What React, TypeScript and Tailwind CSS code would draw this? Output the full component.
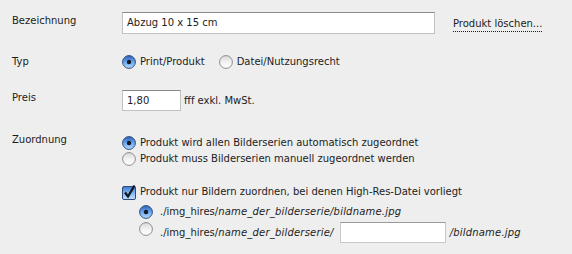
import { useId } from "react";

function Radio({ checked }: { checked?: boolean }) {
  const id = useId().replace(/:/g, "");
  return (
    <svg width="14" height="14" viewBox="0 0 14 14" className="shrink-0">
      <defs>
        <linearGradient id={`g${id}`} x1="0" y1="0" x2="0" y2="1">
          {checked ? (
            <>
              <stop offset="0" stopColor="#2a5fb8" />
              <stop offset="0.5" stopColor="#6aa6ee" />
              <stop offset="1" stopColor="#b9dcff" />
            </>
          ) : (
            <>
              <stop offset="0" stopColor="#d8d8d8" />
              <stop offset="0.55" stopColor="#f4f4f4" />
              <stop offset="1" stopColor="#ffffff" />
            </>
          )}
        </linearGradient>
      </defs>
      <circle
        cx="7"
        cy="7"
        r="6.4"
        fill={`url(#g${id})`}
        stroke={checked ? "#31507f" : "#8c8c8c"}
        strokeWidth="1"
      />
      {checked && <circle cx="7" cy="7" r="2.2" fill="#141a24" />}
    </svg>
  );
}

function Checkbox() {
  const id = useId().replace(/:/g, "");
  return (
    <svg width="15" height="15" viewBox="0 0 15 15" className="shrink-0 overflow-visible">
      <defs>
        <linearGradient id={`c${id}`} x1="0" y1="0" x2="0" y2="1">
          <stop offset="0" stopColor="#3f79cf" />
          <stop offset="0.5" stopColor="#7fb4f0" />
          <stop offset="1" stopColor="#c4e2ff" />
        </linearGradient>
      </defs>
      <rect x="0.5" y="1.5" width="13" height="13" rx="1.5" fill={`url(#c${id})`} stroke="#2f4c78" />
      <path d="M3 7.5 L6 11.5 L12.5 0.5" fill="none" stroke="#10161f" strokeWidth="2.2" strokeLinejoin="miter" />
    </svg>
  );
}

export default function App() {
  return (
    <div
      className="w-[572px] h-[254px] bg-[#eeeeee] text-[#1c1c1c] text-[10px] leading-[16px] pl-[12px] pt-[12px] overflow-hidden"
      style={{ fontFamily: '"DejaVu Sans", Verdana, sans-serif' }}
    >
      {/* Bezeichnung */}
      <div className="flex items-start">
        <div className="w-[110px] pt-[1px]">Bezeichnung</div>
        <div className="flex items-center">
          <div className="w-[313px] h-[22px] bg-white border border-[#c2c2c2] border-t-[#8a8a8a] pl-[4px] flex items-center">
            Abzug 10 x 15 cm
          </div>
          <span className="ml-[18px] mt-[2px] border-b border-dotted border-[#1c1c1c] leading-[14px]">
            Produkt löschen...
          </span>
        </div>
      </div>

      {/* Typ */}
      <div className="flex items-center mt-[20px]">
        <div className="w-[110px]">Typ</div>
        <div className="flex items-center">
          <Radio checked />
          <span className="ml-[4px]">Print/Produkt</span>
          <span className="ml-[14px]" />
          <Radio />
          <span className="ml-[4px]">Datei/Nutzungsrecht</span>
        </div>
      </div>

      {/* Preis */}
      <div className="flex items-start mt-[20px]">
        <div className="w-[110px]">Preis</div>
        <div className="flex items-center">
          <div className="w-[59px] h-[21px] bg-white border border-[#c2c2c2] border-t-[#8a8a8a] pl-[4px] flex items-center">
            1,80
          </div>
          <span className="ml-[3px]">fff exkl. MwSt.</span>
        </div>
      </div>

      {/* Zuordnung */}
      <div className="flex items-start mt-[24px]">
        <div className="w-[110px] -mt-[3px]">Zuordnung</div>
        <div className="flex flex-col">
          <div className="flex items-center">
            <Radio checked />
            <span className="ml-[4px]">Produkt wird allen Bilderserien automatisch zugeordnet</span>
          </div>
          <div className="flex items-center">
            <Radio />
            <span className="ml-[4px]">Produkt muss Bilderserien manuell zugeordnet werden</span>
          </div>

          <div className="flex items-center mt-[17px]">
            <Checkbox />
            <span className="ml-[3px]">Produkt nur Bildern zuordnen, bei denen High-Res-Datei vorliegt</span>
          </div>
          <div className="flex items-center mt-[4px] ml-[17px]">
            <Radio checked />
            <span className="ml-[7px]">
              ./img_hires/<i className="tracking-[0.2px]">name_der_bilderserie/bildname.jpg</i>
            </span>
          </div>
          <div className="flex items-center mt-[2px] ml-[17px]">
            <div className="-mt-[7px]">
              <Radio />
            </div>
            <span className="ml-[7px]">
              ./img_hires/<i className="tracking-[0.2px]">name_der_bilderserie/</i>
            </span>
            <div className="ml-[6px] w-[106px] h-[21px] bg-white border border-[#c8c8c8] border-t-[#9a9a9a]" />
            <span className="ml-[4px] italic tracking-[0.2px]">/bildname.jpg</span>
          </div>
        </div>
      </div>
    </div>
  );
}
